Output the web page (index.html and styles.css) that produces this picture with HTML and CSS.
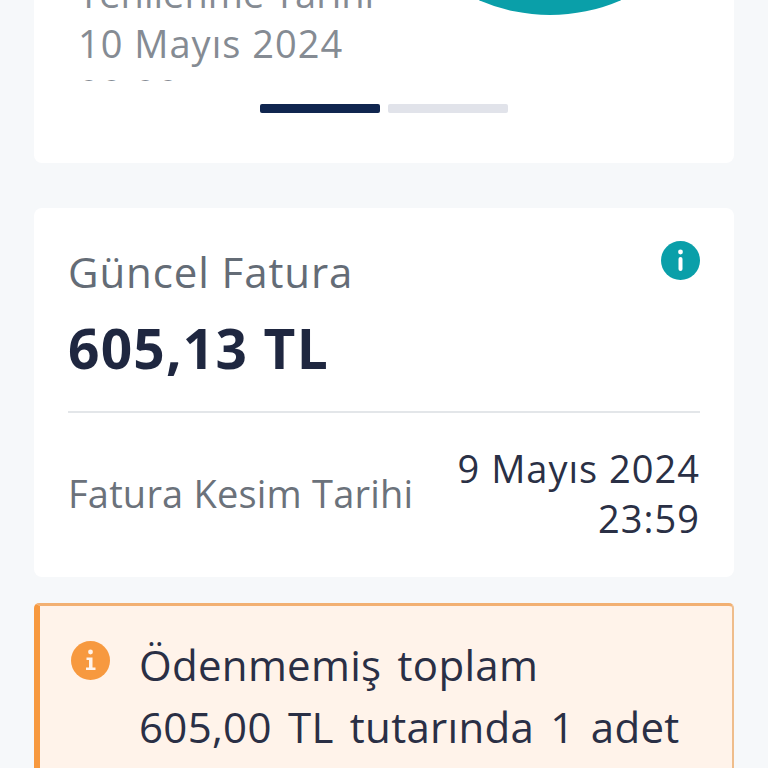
FILE: index.html
```html
<!DOCTYPE html>
<html lang="tr">
<head>
    <meta charset="UTF-8">
    <title>Fatura</title>
    <link rel="stylesheet" href="styles.css">
</head>
<body>
<div class="page">
    <div class="card usage">
        <div class="gauge"></div>
        <div class="renew">
            <div class="renew-title">Yenilenme Tarihi</div>
            <div>10 Mayıs 2024</div>
            <div>00:00</div>
        </div>
        <div class="pager">
            <span class="bar active"></span>
            <span class="bar"></span>
        </div>
    </div>

    <div class="card bill">
        <div class="bill-top">
            <div>
                <div class="bill-label">Güncel Fatura</div>
                <div class="bill-amount">605,13 TL</div>
            </div>
            <svg class="info" width="39" height="39" viewBox="0 0 39 39">
                <circle cx="19.5" cy="19.5" r="19.5" fill="#0a9fa9"/>
                <circle cx="19.5" cy="11" r="2.4" fill="#fff"/>
                <rect x="17.500" y="16" width="4" height="14" rx="2" fill="#fff"/>
            </svg>
        </div>
        <div class="bill-cut">
            <div class="cut-label">Fatura Kesim Tarihi</div>
            <div class="cut-date">9 Mayıs 2024<br>23:59</div>
        </div>
    </div>

    <div class="notice">
        <svg class="notice-icon" width="39" height="39" viewBox="0 0 39 39">
            <circle cx="19.5" cy="19.5" r="19.5" fill="#f7993f"/>
            <circle cx="19.5" cy="11" r="2.4" fill="#fff3ea"/>
            <path d="M15.5 16.5h6v10h3v2.500h-9.500v-2.500h3v-7.500h-2.500z" fill="#fff3ea"/>
        </svg>
        <div class="notice-text">Ödenmemiş toplam<br>605,00 TL tutarında 1 adet fatura bulunmaktadır.</div>
    </div>
</div>
</body>
</html>
```

FILE: styles.css
```css
html, body {
    margin: 0;
    height: 768px;
    overflow: hidden;
}
body {
    font-family: "Open Sans", "Noto Sans", sans-serif;
    background-color: #f6f8fa;
}
.page {
    padding: 0 34px;
    margin-top: -40px;
}
.card {
    background-color: #fff;
    border-radius: 8px;
}

/* top card, scrolled partly out of view */
.usage {
    position: relative;
    overflow: hidden;
    height: 203px;
    margin-bottom: 45px;
}
.gauge {
    position: absolute;
    left: 332px;
    top: -329px;
    width: 368px;
    height: 384px;
    border-radius: 50%;
    background-color: #0a9fa9;
}
.renew {
    height: 121px;
    box-sizing: border-box;
    overflow: hidden;
    padding: 8px 0 0 44px;
    font-size: 38px;
    letter-spacing: 1px;
    line-height: 50px;
    color: #858b93;
}
.renew-title {
    letter-spacing: 0;
}
.pager {
    display: flex;
    justify-content: center;
    gap: 8px;
    margin-top: 23px;
}
.bar {
    width: 120px;
    height: 9px;
    border-radius: 2px;
    background-color: #e1e3ea;
}
.bar.active {
    background-color: #10264f;
}

/* current bill */
.bill {
    height: 369px;
    padding: 0 34px;
    box-sizing: border-box;
    margin-bottom: 26px;
}
.bill-top {
    display: flex;
    justify-content: space-between;
    padding-top: 33px;
    height: 205px;
    box-sizing: border-box;
    border-bottom: 2px solid #e3e6e9;
}
.bill-label {
    margin-top: 1px;
    font-size: 42px;
    letter-spacing: 0.9px;
    line-height: 60px;
    color: #646c76;
}
.bill-amount {
    margin-top: 6px;
    font-size: 55px;
    font-weight: 700;
    letter-spacing: 1.2px;
    line-height: 80px;
    color: #1f2740;
}
.bill-cut {
    display: flex;
    justify-content: space-between;
    align-items: center;
    padding-top: 30px;
}
.cut-label {
    font-size: 38px;
    letter-spacing: 0.2px;
    color: #6b727b;
}
.cut-date {
    font-size: 38px;
    letter-spacing: 1px;
    line-height: 50px;
    text-align: right;
    color: #2a3045;
}

/* unpaid warning */
.notice {
    display: flex;
    gap: 29px;
    height: 300px;
    padding: 28px 30px 28px 31px;
    box-sizing: border-box;
    background-color: #fff3ea;
    border-top: 3px solid #f2b072;
    border-right: 2px solid #efbd8b;
    border-left: 6px solid #f7993f;
    border-radius: 5px;
}
.notice-icon {
    flex: none;
    margin-top: 7px;
}
.notice-text {
    font-size: 42px;
    letter-spacing: 0.3px;
    word-spacing: 5px;
    line-height: 62px;
    color: #2a2f45;
}
```
